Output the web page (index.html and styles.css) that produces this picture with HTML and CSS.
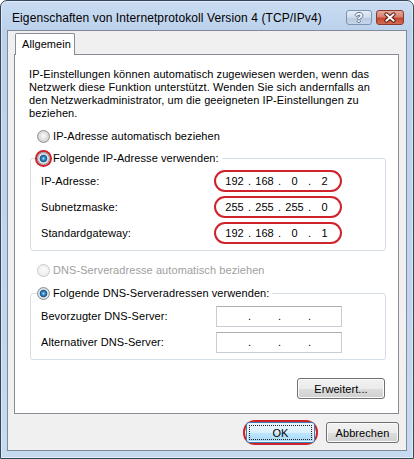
FILE: index.html
```html
<!DOCTYPE html>
<html lang="de">
<head>
<meta charset="utf-8">
<title>Eigenschaften von Internetprotokoll Version 4 (TCP/IPv4)</title>
<link rel="stylesheet" href="styles.css">
</head>
<body>
<div class="window">
  <div class="titlebar">
    <span class="title">Eigenschaften von Internetprotokoll Version 4 (TCP/IPv4)</span>
    <div class="caption">
      <span class="cbtn help">?</span>
      <span class="cbtn close"><svg width="28" height="15" viewBox="0 0 28 15"><path d="M10 4 L18 11 M18 4 L10 11" stroke="#5a1a12" stroke-width="4.2" stroke-linecap="round" fill="none"/><path d="M10 4 L18 11 M18 4 L10 11" stroke="#ffffff" stroke-width="2" stroke-linecap="round" fill="none"/></svg></span>
    </div>
  </div>
  <div class="client">
    <div class="tabs"><span class="tab">Allgemein</span></div>
    <div class="panel">
      <p class="intro">IP-Einstellungen können automatisch zugewiesen werden, wenn das<br>Netzwerk diese Funktion unterstützt. Wenden Sie sich andernfalls an<br>den Netzwerkadministrator, um die geeigneten IP-Einstellungen zu<br>beziehen.</p>
      <div class="option first"><span class="radio"></span><span>IP-Adresse automatisch beziehen</span></div>
      <fieldset class="group">
        <legend class="legend"><span class="radio checked marked"></span><span>Folgende IP-Adresse verwenden:</span></legend>
        <div class="row"><span class="lbl">IP-Adresse:</span><span class="ipbox marked"><span class="seg">192</span><span class="dot">.</span><span class="seg">168</span><span class="dot">.</span><span class="seg">0</span><span class="dot">.</span><span class="seg">2</span></span></div>
        <div class="row"><span class="lbl">Subnetzmaske:</span><span class="ipbox marked"><span class="seg">255</span><span class="dot">.</span><span class="seg">255</span><span class="dot">.</span><span class="seg">255</span><span class="dot">.</span><span class="seg">0</span></span></div>
        <div class="row"><span class="lbl">Standardgateway:</span><span class="ipbox marked"><span class="seg">192</span><span class="dot">.</span><span class="seg">168</span><span class="dot">.</span><span class="seg">0</span><span class="dot">.</span><span class="seg">1</span></span></div>
      </fieldset>
      <div class="option disabled"><span class="radio"></span><span>DNS-Serveradresse automatisch beziehen</span></div>
      <fieldset class="group dns">
        <legend class="legend"><span class="radio checked"></span><span>Folgende DNS-Serveradressen verwenden:</span></legend>
        <div class="row"><span class="lbl">Bevorzugter DNS-Server:</span><span class="ipbox"><span class="seg"></span><span class="dot">.</span><span class="seg"></span><span class="dot">.</span><span class="seg"></span><span class="dot">.</span><span class="seg"></span></span></div>
        <div class="row"><span class="lbl">Alternativer DNS-Server:</span><span class="ipbox"><span class="seg"></span><span class="dot">.</span><span class="seg"></span><span class="dot">.</span><span class="seg"></span><span class="dot">.</span><span class="seg"></span></span></div>
      </fieldset>
      <div class="panel-actions"><span class="btn wide">Erweitert...</span></div>
    </div>
    <div class="dialog-buttons">
      <span class="ring"><span class="btn default">OK</span></span>
      <span class="btn">Abbrechen</span>
    </div>
  </div>
</div>
</body>
</html>
```
FILE: styles.css
```css
* { box-sizing: border-box; }
html, body { margin: 0; padding: 0; }
body {
  background: #ffffff;
  font-family: "Liberation Sans", Arial, sans-serif;
  font-size: 11px;
  letter-spacing: 0.08px;
  color: #000;
}
.window {
  width: 414px;
  height: 459px;
  border: 1px solid #34465c;
  border-radius: 7px 7px 0 0;
  background: linear-gradient(180deg, #c9dcf1 0px, #bcd2ec 28px, #bed4ed 200px, #c6daf0 100%);
  box-shadow: inset 0 0 0 1px rgba(255,255,255,0.45);
  padding: 0 6px 7px 6px;
  display: flex;
  flex-direction: column;
}
.titlebar {
  height: 29px;
  flex: none;
  display: flex;
  align-items: flex-start;
  padding: 0 3px 0 5px;
}
.title {
  margin-top: 9px;
  line-height: 16px;
  font-size: 12px;
  letter-spacing: 0.1px;
  color: #000;
}
.caption {
  margin-left: auto;
  margin-top: 9px;
  display: flex;
  gap: 4px;
}
.cbtn {
  height: 15px;
  border-radius: 3px;
  display: flex;
  align-items: center;
  justify-content: center;
}
.help {
  width: 26px;
  border: 1px solid #7e93ad;
  background: linear-gradient(180deg, #e4edf7 0%, #cfdcec 50%, #b6c9e0 51%, #c6d6ea 100%);
  color: #ffffff;
  font-weight: bold;
  font-size: 13px;
  line-height: 13px;
  text-shadow: 1px 0 0 #5d7390, -1px 0 0 #5d7390, 0 1px 0 #5d7390, 0 -1px 0 #5d7390;
}
.close {
  width: 28px;
  border: 1px solid #8a3a2e;
  background: linear-gradient(180deg, #e6a99c 0%, #d8806f 45%, #c4442f 55%, #d36a52 100%);
}
.close svg { display: block; }
.client {
  flex: 1;
  border: 1px solid #7f8b99;
  background: #f0f0f0;
  padding: 2px 7px 0 6px;
  display: flex;
  flex-direction: column;
}
.tabs {
  display: flex;
  padding-left: 1px;
  position: relative;
  z-index: 1;
  margin-bottom: -1px;
}
.tab {
  width: 60px;
  height: 22px;
  border: 1px solid #898c95;
  border-bottom: none;
  border-radius: 2px 2px 0 0;
  background: #ffffff;
  padding-left: 6px;
  line-height: 21px;
}
.panel {
  height: 360px;
  border: 1px solid #898c95;
  background: #ffffff;
  padding: 13px 0 14px 14px;
}
.intro {
  margin: 0;
  line-height: 13px;
}
.option {
  display: flex;
  align-items: center;
  gap: 3px;
  height: 14px;
  margin-left: 8px;
}
.option.first { margin-top: 9px; }
.option.disabled { color: #a0a0a0; margin-top: 12px; }
.radio {
  width: 13px;
  height: 13px;
  flex: none;
  border-radius: 50%;
  border: 1px solid #8e8f8f;
  background: radial-gradient(circle at 50% 45%, #fbfbfb 0, #e6e6e6 3px, #cfcfcf 6px);
}
.option.disabled .radio {
  border-color: #c8c8c8;
  background: radial-gradient(circle at 50% 45%, #fafafa 0, #eeeeee 6px);
}
.radio.checked {
  background: radial-gradient(circle at 50% 50%, #a8dbfa 0, #3b8fd0 1.6px, #1c5389 3.4px, #dfe8ef 4.2px, #d2d2d2 6px);
}
.radio.marked {
  box-shadow: 0 0 0 2px #d0222b;
}
fieldset.group {
  margin: 8px 12px 0 1px;
  padding: 3px 10px 4px 10px;
  border: 1px solid #d5dfe5;
  border-radius: 3px;
  min-width: 0;
}
fieldset.group.dns { margin-top: 9px; }
.legend {
  display: flex;
  align-items: center;
  gap: 3px;
  height: 14px;
  line-height: 14px;
  padding: 0 3px 0 0;
  margin-left: -4px;
}
.row {
  display: flex;
  align-items: center;
  height: 26px;
}
.lbl { width: 173px; flex: none; }
.ipbox {
  display: flex;
  align-items: center;
  width: 126px;
  height: 21px;
  margin-left: 2px;
  padding-left: 5px;
  border: 1px solid #c9ccd2;
  border-top-color: #abadb3;
  background: #ffffff;
}
.ipbox.marked {
  width: 128px;
  height: 22px;
  margin-left: 0;
  padding-left: 6px;
  border: 2px solid #d0222b;
  border-radius: 11px;
}
.seg { width: 25px; text-align: center; }
.dot { width: 5px; text-align: center; }
.panel-actions {
  display: flex;
  justify-content: flex-end;
  margin: 18px 13px 0 0;
}
.btn {
  height: 21px;
  width: 73px;
  display: flex;
  align-items: center;
  justify-content: center;
  border: 1px solid #707070;
  border-radius: 3px;
  background: linear-gradient(180deg, #f2f2f2 0%, #ebebeb 50%, #dddddd 51%, #cfcfcf 100%);
  box-shadow: inset 0 0 0 1px #fbfbfb;
}
.btn.wide { width: 88px; }
.btn.default {
  width: 69px;
  border-color: #3c7fb1;
  background: linear-gradient(180deg, #eaf6fd 0%, #d9f0fc 50%, #bee6fd 51%, #a7d9f5 100%);
  box-shadow: inset 0 0 0 1px #e8f4fb;
  outline: 1px dotted #222;
  outline-offset: -4px;
}
.dialog-buttons {
  display: flex;
  justify-content: flex-end;
  align-items: center;
  gap: 8px;
  margin-top: 8px;
}
.ring {
  display: flex;
  border: 2px solid #d0222b;
  border-radius: 12px;
  padding: 0 1px;
  margin: -2px 0;
}
```
